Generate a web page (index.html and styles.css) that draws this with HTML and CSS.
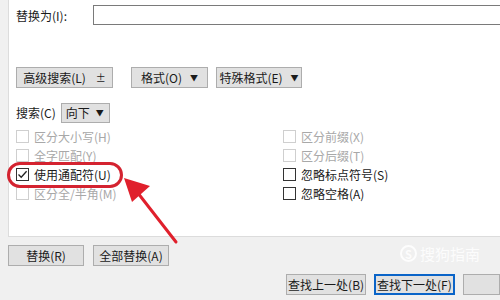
FILE: index.html
```html
<!DOCTYPE html>
<html lang="zh-CN">
<head>
  <meta charset="UTF-8" />
  <title>查找和替换</title>
  <link rel="stylesheet" href="styles.css">
</head>
<body>
  <div class="dialog">
    <div class="panel">
      <div class="replace-row">
        <span class="label">替换为(I):</span>
        <div class="field"></div>
      </div>

      <div class="btn-row">
        <button class="btn w96">高级搜索(L) <span class="updown">±</span></button>
        <button class="btn w77 spaced">格式(O) <span class="caret">▼</span></button>
        <button class="btn w86">特殊格式(E)<span class="caret">▼</span></button>
      </div>

      <div class="search-row">
        <span>搜索(C)</span>
        <div class="select">向下 <span class="caret">▼</span></div>
      </div>

      <div class="options">
        <div class="col">
          <label class="opt off"><span class="box"></span>区分大小写(H)</label>
          <label class="opt off"><span class="box"></span>全字匹配(Y)</label>
          <label class="opt"><span class="box checked">
            <svg width="11" height="11" viewBox="0 0 11 11"><path d="M1.5 5.5 L4.2 8.3 L9.6 2.2" fill="none" stroke="#222" stroke-width="1.3"/></svg>
          </span>使用通配符(U)</label>
          <label class="opt off"><span class="box"></span>区分全/半角(M)</label>
        </div>
        <div class="col right">
          <label class="opt off"><span class="box"></span>区分前缀(X)</label>
          <label class="opt off"><span class="box"></span>区分后缀(T)</label>
          <label class="opt"><span class="box"></span>忽略标点符号(S)</label>
          <label class="opt"><span class="box"></span>忽略空格(A)</label>
        </div>
      </div>
    </div>

    <div class="actions">
      <button class="btn w76">替换(R)</button>
      <button class="btn w76">全部替换(A)</button>
    </div>

    <div class="find-row">
      <button class="btn w86">查找上一处(B)</button>
      <button class="btn w86 focus">查找下一处(F)</button>
      <button class="btn w40"></button>
    </div>

    <!-- annotation drawn over the dialog -->
    <div class="ring"></div>
    <svg class="arrow" width="70" height="80" viewBox="0 0 70 80">
      <line x1="56" y1="70" x2="14" y2="16" stroke="#e0202c" stroke-width="3" stroke-linecap="round"/>
      <polygon points="4,6 30,14 12,30" fill="#e0202c"/>
    </svg>
    <div class="watermark">
      <span class="s">S</span>搜狗指南
    </div>
  </div>
</body>
</html>
```

FILE: styles.css
```css
* {
  box-sizing: border-box;
  margin: 0;
  padding: 0;
}
body {
  background: #f0f0f0;
  color: #1a1a1a;
  font-family: "Noto Sans CJK SC", "Liberation Sans", sans-serif;
  font-size: 12px;
  width: 500px;
  height: 300px;
  overflow: hidden;
}
.dialog {
  position: relative;
  height: 300px;
}
.panel {
  margin-left: 8px;
  height: 237px;
  background: #fff;
  border-left: 1px solid #dcdcdc;
  border-bottom: 1px solid #dcdcdc;
  padding: 5px 0 0 7px;
}
.replace-row {
  display: flex;
  align-items: center;
  height: 20px;
}
.label {
  width: 77px;
}
.field {
  flex: 1;
  height: 20px;
  border: 1px solid #7a7a7a;
  border-right: none;
  background: #fff;
}
.btn-row {
  display: flex;
  gap: 8px;
  margin-top: 42px;
}
.btn {
  height: 21px;
  background: #e1e1e1;
  border: 1px solid #adadad;
  font-family: inherit;
  font-size: 12px;
  color: #1a1a1a;
  display: flex;
  align-items: center;
  justify-content: center;
  gap: 4px;
  line-height: 1;
}
.btn.spaced {
  margin-left: 10px;
}
.w96 { width: 97px; }
.w77 { width: 77px; }
.w86 { width: 86px; }
.w76 { width: 76px; }
.w40 { width: 40px; }
.updown {
  font-size: 10px;
  margin-left: 6px;
}
.caret {
  font-size: 8px;
  margin-left: 4px;
}
.search-row {
  display: flex;
  align-items: center;
  gap: 5px;
  margin-top: 14px;
  height: 21px;
}
.select {
  width: 49px;
  height: 20px;
  background: #e1e1e1;
  border: 1px solid #adadad;
  display: flex;
  align-items: center;
  padding-left: 4px;
  gap: 2px;
}
.options {
  display: flex;
  margin-top: 4px;
}
.col {
  display: flex;
  flex-direction: column;
  width: 267px;
}
.col.right {
  width: auto;
}
.opt {
  display: flex;
  align-items: center;
  gap: 5px;
  height: 19px;
}
.opt.off {
  color: #a8a8a8;
}
.box {
  width: 13px;
  height: 13px;
  border: 1px solid #333;
  background: #fff;
  display: flex;
  align-items: center;
  justify-content: center;
}
.opt.off .box {
  border-color: #cfcfcf;
}
.actions {
  display: flex;
  gap: 9px;
  margin: 8px 0 0 8px;
}
.find-row {
  display: flex;
  gap: 8px;
  margin-top: 8px;
  padding-left: 286px;
}
.btn.focus {
  border: 2px solid #0a64c8;
}
.ring {
  position: absolute;
  left: 7px;
  top: 162px;
  width: 116px;
  height: 26px;
  border: 3px solid #d42330;
  border-radius: 13px;
}
.arrow {
  position: absolute;
  left: 120px;
  top: 172px;
}
.watermark {
  position: absolute;
  left: 400px;
  top: 243px;
  color: rgba(255, 255, 255, 0.85);
  font-size: 15px;
  display: flex;
  align-items: center;
  gap: 3px;
}
.watermark .s {
  width: 17px;
  height: 17px;
  border: 2px solid rgba(255, 255, 255, 0.85);
  border-radius: 50%;
  font-size: 11px;
  display: flex;
  align-items: center;
  justify-content: center;
  font-weight: bold;
}
```
